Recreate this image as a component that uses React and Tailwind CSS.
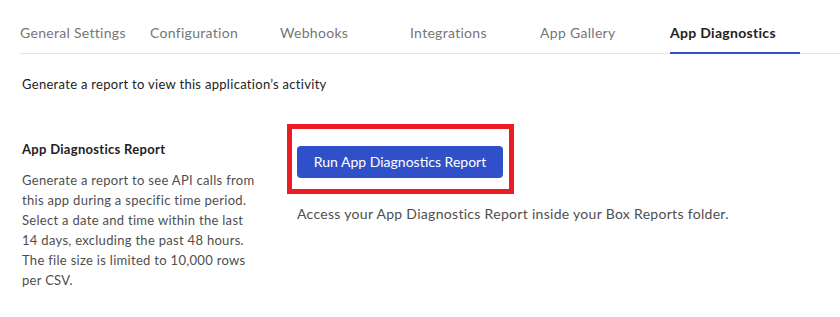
import React from 'react'

const tabs = ['General Settings', 'Configuration', 'Webhooks', 'Integrations', 'App Gallery', 'App Diagnostics']

export default function App() {
  const active = 'App Diagnostics'

  return (
    <div className="w-[840px] h-[317px] bg-white overflow-hidden tracking-[0.3px]" style={{ fontFamily: 'Lato, "Open Sans", sans-serif' }}>
      <div className="pt-[22px] pl-[20px]">
        <div className="flex border-b border-[#e4e4e4]">
          {tabs.map((t) => (
            <div
              key={t}
              className={
                'w-[130px] h-[32px] text-[14px] leading-[22px] border-b-2 -mb-px ' +
                (t === active ? 'font-bold text-[#222] border-[#2f50c9]' : 'text-[#767676] border-transparent')
              }
            >
              {t}
            </div>
          ))}
        </div>
      </div>

      <p className="pl-[22px] mt-[21px] text-[13px] leading-[18px] text-[#222]">
        Generate a report to view this application’s activity
      </p>

      <div className="flex mt-[31px] pl-[22px]">
        <div className="w-[236px] pt-[16px]">
          <h3 className="text-[13px] font-bold leading-[18px] text-[#222]">App Diagnostics Report</h3>
          <p className="mt-[12px] text-[13px] leading-[20px] text-[#4e4e4e]">
            Generate a report to see API calls from this app during a specific time period. Select a date and time within the last 14 days, excluding the past 48 hours. The file size is limited to 10,000 rows per CSV.
          </p>
        </div>
        <div className="ml-[29px]">
          <div className="w-[227px] h-[70px] border-[5px] border-[#ec1c24] pt-[17px] pl-[5px]">
            <button className="w-[206px] h-[32px] rounded-[4px] bg-[#2f50c9] text-white text-[14px] leading-none tracking-normal">
              Run App Diagnostics Report
            </button>
          </div>
          <p className="mt-[10px] ml-[10px] text-[14px] leading-[20px] text-[#4e4e4e]">
            Access your App Diagnostics Report inside your Box Reports folder.
          </p>
        </div>
      </div>
    </div>
  )
}
